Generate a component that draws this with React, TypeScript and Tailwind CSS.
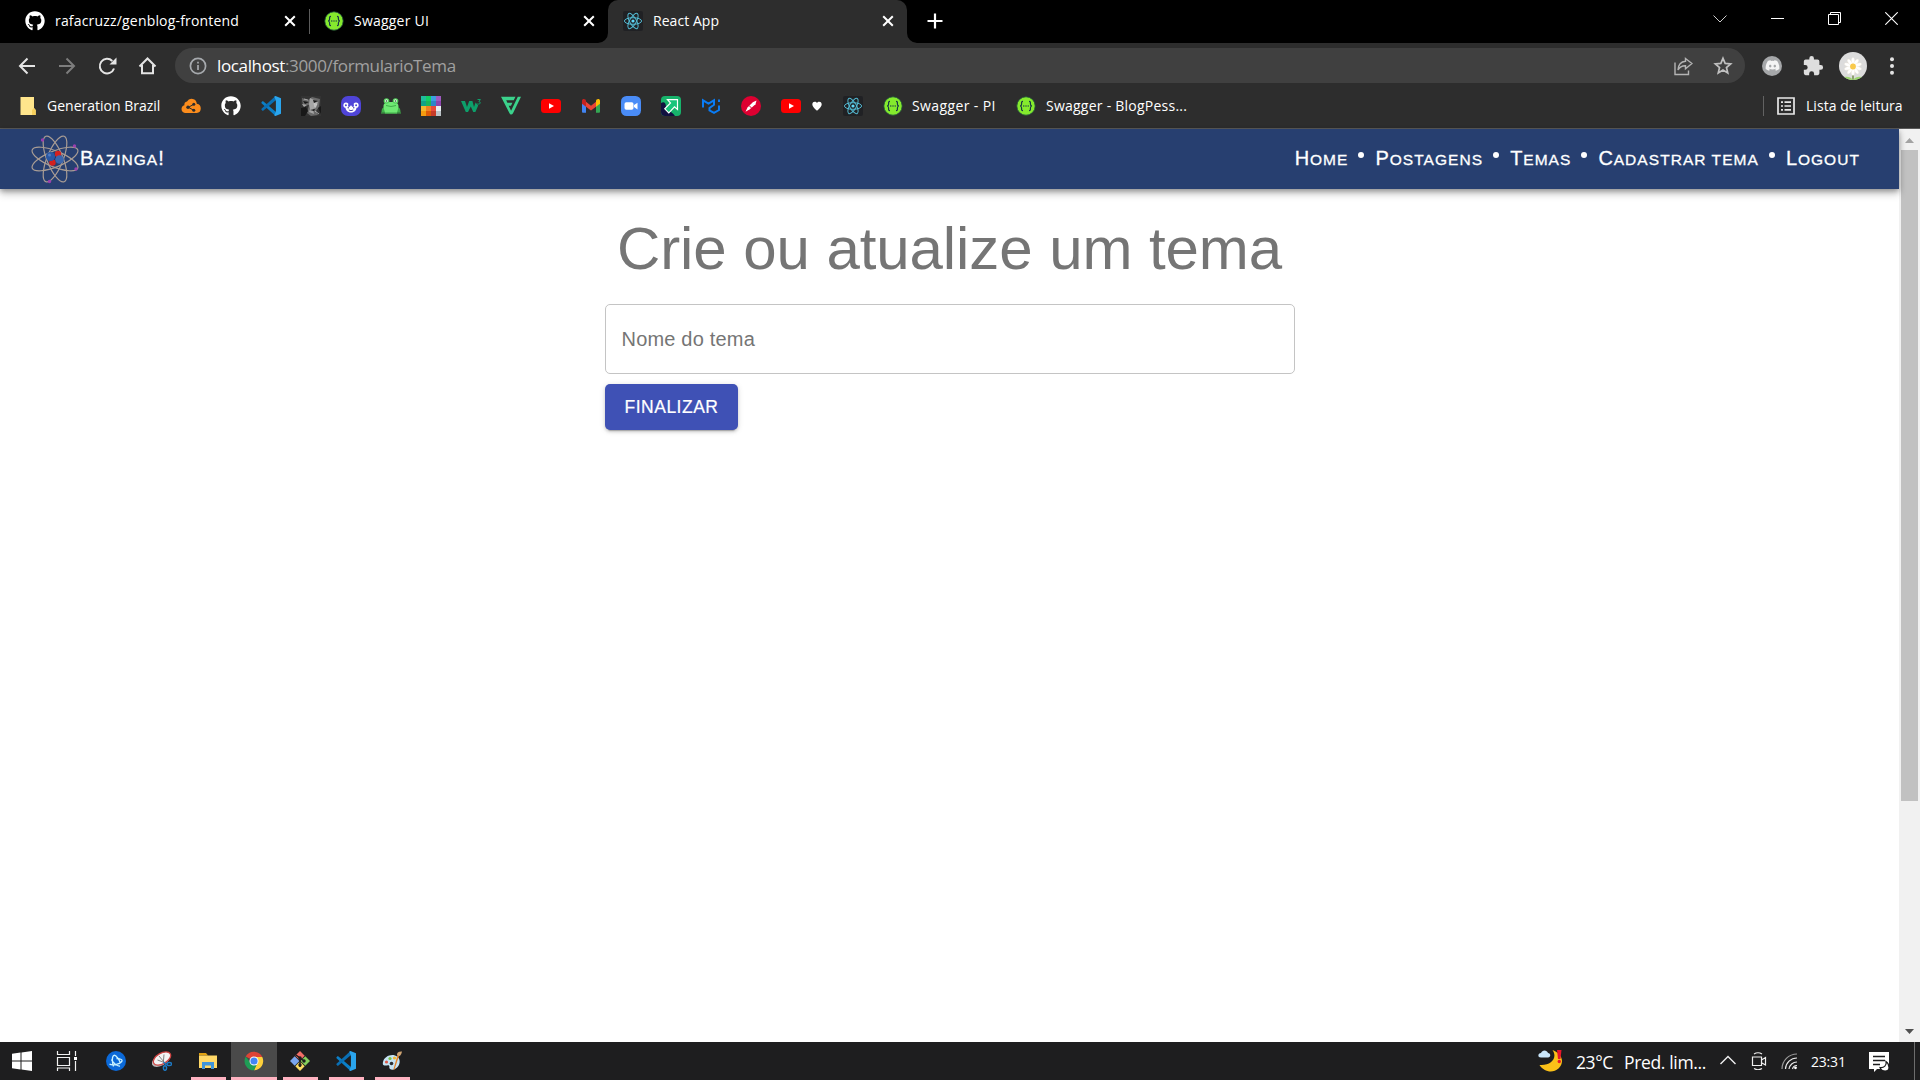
import React from "react";
import { FaGithub, FaDiscord } from "react-icons/fa";

const ui = "font-['Open_Sans','Noto_Sans',sans-serif]";

function GithubIcon() {
  return <FaGithub className="size-5 shrink-0 text-white" />;
}

function SwaggerIcon() {
  return (
    <svg viewBox="0 0 20 20" className="size-5 shrink-0">
      <circle cx="10" cy="10" r="9.2" fill="#85ea2d" stroke="#20503f" strokeWidth="0.8" />
      <g fill="none" stroke="#173647" strokeWidth="1.2">
        <path d="M7 5.400C5.300 5.400 5.600 6.800 5.600 8S5 10 4 10c1 0 1.600.8 1.600 2s-.3 2.600 1.400 2.600" />
        <path d="M13 5.400c1.700 0 1.400 1.400 1.400 2.600s.6 2 1.600 2c-1 0-1.600.8-1.600 2s.3 2.600-1.400 2.600" />
      </g>
      <g fill="#173647">
        <circle cx="7.800" cy="10" r=".7" />
        <circle cx="10" cy="10" r=".7" />
        <circle cx="12.200" cy="10" r=".7" />
      </g>
    </svg>
  );
}

function ReactTile() {
  return (
    <span className="flex size-5 shrink-0 items-center justify-center rounded-[2px] bg-[#202124]">
      <svg viewBox="0 0 20 20" className="size-5" fill="none" stroke="#53b9d1" strokeWidth="1">
        <ellipse cx="10" cy="10" rx="8.600" ry="3.300" />
        <ellipse cx="10" cy="10" rx="8.600" ry="3.300" transform="rotate(60 10 10)" />
        <ellipse cx="10" cy="10" rx="8.600" ry="3.300" transform="rotate(120 10 10)" />
        <circle cx="10" cy="10" r="1.600" fill="#61dafb" stroke="none" />
      </svg>
    </span>
  );
}

function VsCodeIcon() {
  return (
    <svg viewBox="0 0 20 20" className="size-5">
      <path d="M.4 6.200 1.900 5l12.800 10.800L14.600 20 .5 7.300z" fill="#0b7fc7" />
      <path d="M.4 13.800 1.900 15 14.800 4.300 14.500 0 .5 12.700z" fill="#0a6fb4" />
      <path d="M14.500 0 20 2.300v15.400L14.500 20l-1.200-.6L14.900 15V5l-1.600-4.400z" fill="#2aa5ee" />
    </svg>
  );
}

function YoutubeIcon() {
  return (
    <svg viewBox="0 0 20 20" className="size-5 shrink-0">
      <rect y="3" width="20" height="14" rx="3.500" fill="#f00" />
      <path d="M8 7.200v5.600l5-2.800z" fill="#fff" />
    </svg>
  );
}

function CloseX({ className = "" }: { className?: string }) {
  return (
    <svg viewBox="0 0 12 12" className={`size-3 shrink-0 ${className}`}>
      <path d="M1.200 1.200l9.600 9.600M10.800 1.200 1.200 10.800" stroke="#fff" strokeWidth="2" />
    </svg>
  );
}

function TabStrip() {
  return (
    <div className="flex h-[43px] bg-black text-[14px] text-white">
      <div className="flex h-full w-[310px] items-center pb-px pl-[25px]">
        <GithubIcon />
        <span className="-mt-px ml-[10px] w-[230px] tracking-[0.18px] whitespace-nowrap">rafacruzz/genblog-frontend</span>
        <CloseX className="-ml-[1px]" />
        <span className="ml-[13px] h-[25px] w-px bg-[#5c5c5c]" />
      </div>
      <div className="flex h-full w-[298px] items-center pb-px pl-[14px]">
        <SwaggerIcon />
        <span className="-mt-px ml-[10px] w-[229px] tracking-[0.22px] whitespace-nowrap">Swagger UI</span>
        <CloseX />
      </div>
      <div className="relative flex h-full w-[299px] items-center rounded-t-[10px] bg-[#2d2d2d] pb-px pl-[15px]">
        <svg viewBox="0 0 10 10" className="absolute bottom-0 -left-[10px] size-[10px]">
          <path d="M10 0v10H0A10 10 0 0 0 10 0z" fill="#2d2d2d" />
        </svg>
        <svg viewBox="0 0 10 10" className="absolute -right-[10px] bottom-0 size-[10px]">
          <path d="M0 0v10h10A10 10 0 0 1 0 0z" fill="#2d2d2d" />
        </svg>
        <ReactTile />
        <span className="-mt-px ml-[10px] w-[229px] tracking-[0.05px] whitespace-nowrap">React App</span>
        <CloseX />
      </div>
      <svg viewBox="0 0 16 16" className="mt-[13px] ml-[20px] size-4">
        <path d="M8 .5v15M.5 8h15" stroke="#fff" strokeWidth="2.200" />
      </svg>
      <div className="ml-auto flex h-[37px] items-center gap-[44px] pr-[22px]">
        <svg viewBox="0 0 14 14" className="size-[14px]" fill="none" stroke="#ccc">
          <path d="M.5 3.500 7 10l6.500-6.500" />
        </svg>
        <svg viewBox="0 0 13 13" className="size-[13px]">
          <path d="M0 6.500h13" stroke="#fff" />
        </svg>
        <svg viewBox="0 0 13 13" className="size-[13px]" fill="none" stroke="#fff">
          <path d="M.5 2.500h10v10H.5zM2.500 2.500v-2h10v10h-2" />
        </svg>
        <svg viewBox="0 0 13 13" className="size-[13px]" stroke="#fff" strokeWidth="1.100">
          <path d="m.3.3 12.400 12.400M12.700.3.3 12.700" />
        </svg>
      </div>
    </div>
  );
}

function AddressRow() {
  return (
    <div className="flex h-[45px] items-center">
      <svg viewBox="0 0 20 20" className="ml-[17px] size-5" fill="none" stroke="#e4e4e4" strokeWidth="2">
        <path d="M18 10H3.500M10.500 2.500 3 10l7.500 7.500" />
      </svg>
      <svg viewBox="0 0 20 20" className="ml-5 size-5" fill="none" stroke="#7d7d7d" strokeWidth="2">
        <path d="M2 10h14.500M9.500 2.500 17 10l-7.500 7.500" />
      </svg>
      <svg viewBox="0 0 20 20" className="ml-5 size-5" fill="none" stroke="#e4e4e4" strokeWidth="2">
        <path d="M17 12.500A7.300 7.300 0 1 1 15.300 5" />
        <path d="M19.500 1.500V8.500h-7z" fill="#e4e4e4" stroke="none" />
      </svg>
      <svg viewBox="0 0 20 20" className="ml-5 size-5" fill="none" stroke="#e4e4e4" strokeWidth="2">
        <path d="M5 9v8.300h11V9M2.500 10.500l8-8 8 8" />
      </svg>
      <div className="ml-[18px] flex h-[35px] w-[1570px] items-center rounded-full bg-[#404040]">
        <svg viewBox="0 0 18 18" className="ml-[14px] size-[18px]" fill="none" stroke="#a6a9ad" strokeWidth="1.700">
          <circle cx="9" cy="9" r="7.600" />
          <path d="M9 8v5M9 4.800v1.700" />
        </svg>
        <span className="ml-[10px] text-[17px] tracking-[-0.36px] whitespace-nowrap text-[#a0a0a0]">
          <span className="text-white">localhost</span>:3000/formularioTema
        </span>
        <svg viewBox="0 0 20 20" className="mr-5 ml-auto size-5" fill="none" stroke="#b4b4b4" strokeWidth="1.400">
          <path d="M2 6.500v12h13.500v-4" />
          <path d="M12.500 2.500 19 7.500l-6.500 5.300V9.800C9 9.700 6.600 11 5 14c.3-5 3-8.300 7.500-8.700z" />
        </svg>
        <svg viewBox="0 0 20 20" className="mr-[12.5px] size-5" fill="none" stroke="#c0c0c0" strokeWidth="1.700">
          <path d="m10 2.300 2.150 5.100 5.500.5-4.200 3.600 1.300 5.400L10 14l-4.750 2.900 1.300-5.400-4.200-3.600 5.500-.5z" />
        </svg>
      </div>
      <span className="ml-[17px] flex size-5 items-center justify-center rounded-full bg-[#a5a7a9]">
        <FaDiscord className="size-[15px] text-[#f4f4f4]" />
      </span>
      <svg viewBox="0 0 24 24" className="ml-[20px] size-[22px]" fill="#dedede">
        <path d="M20.500 11H19V7a2 2 0 0 0-2-2h-4V3.500a2.500 2.500 0 0 0-5 0V5H4a2 2 0 0 0-2 2v3.800h1.500a2.700 2.700 0 0 1 0 5.400H2V20a2 2 0 0 0 2 2h3.800v-1.500a2.700 2.700 0 0 1 5.400 0V22H17a2 2 0 0 0 2-2v-4h1.500a2.500 2.500 0 0 0 0-5z" />
      </svg>
      <svg viewBox="0 0 28 28" className="ml-[15px] size-7">
        <clipPath id="avatarClip">
          <circle cx="14" cy="14" r="14" />
        </clipPath>
        <g clipPath="url(#avatarClip)">
          <rect width="28" height="28" fill="#dcdcdc" />
          <path d="M14 18v10" stroke="#5d7c2e" strokeWidth="1.200" />
          <path d="M5 25q6-1 9 3H5zM23 25q-6-1-9 3h9z" fill="#9cd66e" />
          <g fill="#fff" stroke="#eee3cf" strokeWidth=".3">
            {[0, 36, 72, 108, 144, 180, 216, 252, 288, 324].map((a) => (
              <ellipse key={a} cx="14" cy="9.500" rx="1.700" ry="4" transform={`rotate(${a} 14 14.500)`} />
            ))}
          </g>
          <circle cx="14" cy="14.500" r="2.900" fill="#f9c94a" />
        </g>
      </svg>
      <svg viewBox="0 0 6 18" className="ml-[22px] h-[18px] w-[6px]" fill="#e4e4e4">
        <circle cx="3" cy="2.300" r="2" />
        <circle cx="3" cy="9" r="2" />
        <circle cx="3" cy="15.700" r="2" />
      </svg>
    </div>
  );
}

const gridColors = [
  "#1fbc9c", "#12ce62", "#3c9fe0", "#9f5bc0",
  "#12a286", "#1db45a", "#2e86c8", "#8e44ad",
  "#f5b82e", "#f08124", "#e94b3b", "#e9eef0",
  "#f59b0f", "#dc5a08", "#c63b28", "#bcc3c7",
];

function BookmarkIcons() {
  return (
    <div className="grid auto-cols-[40px] grid-flow-col">
      <svg viewBox="0 0 20 20" className="size-5">
        <path d="M4 17a4 4 0 0 1-.6-7.800A3.400 3.400 0 0 1 6 5.400a5.300 5.300 0 0 1 9.800 2.300A4.700 4.700 0 0 1 15.700 17z" fill="#fb8c1c" />
        <path d="m12.700 8.300-5.200 3 5.200 3" fill="none" stroke="#2d2d2d" />
        <g fill="#2d2d2d">
          <circle cx="7" cy="11.300" r="1.700" />
          <circle cx="12.800" cy="8.300" r="1.500" />
          <circle cx="12.800" cy="14.200" r="1.500" />
        </g>
      </svg>
      <GithubIcon />
      <VsCodeIcon />
      <svg viewBox="0 0 20 20" className="size-5">
        <rect width="20" height="20" fill="#333" />
        <path d="M1 2 7 4l4-3 8 2-1 8-3 4 2 4-7 1-4-3 2-8-6 1z" fill="#6a6a6a" />
        <path d="M9 2 8 8l1 5-1 3 5 2-1-5 3-1 2-6-4-2zM1 8l5 1-3 2z" fill="#a5a5a5" />
        <path d="M12 4l5 1-4 2zM2 5l6 1-4 2zM0 12l5-1 2 4-3 5H0zM9 14l5-1-1 2zM17 12l3-2v8z" fill="#181818" />
        <path d="M13 7.500l3 .5-2 3zM3 3l4 1M14 15l4 3" stroke="#ccc" strokeWidth=".7" fill="#bdbdbd" />
      </svg>
      <svg viewBox="0 0 20 20" className="size-5">
        <rect width="20" height="20" rx="7" fill="#4f44d8" />
        <circle cx="5" cy="9.200" r="2.600" fill="#fff" />
        <circle cx="15" cy="9.200" r="2.600" fill="#fff" />
        <path d="M4.500 10h11c.5 4-2 6.500-5.500 6.500S4 14 4.500 10z" fill="#fff" />
        <path d="M7.200 8.500q2.800-1.500 5.600 0v2.200H7.200z" fill="#4f44d8" />
        <circle cx="4.900" cy="9.200" r="1" fill="#4f44d8" />
        <circle cx="15.100" cy="9.200" r="1" fill="#4f44d8" />
        <circle cx="7.200" cy="11.800" r=".7" fill="#3b309c" />
        <circle cx="12.800" cy="11.800" r=".7" fill="#3b309c" />
        <rect x="9" y="9.500" width="2" height="3.800" rx="1" fill="#fff" />
        <path d="M7.800 14q2.200 1.300 4.400 0" fill="none" stroke="#3b309c" strokeWidth=".9" />
      </svg>
      <svg viewBox="0 0 20 20" className="size-5">
        <path d="M.5 16.500c0-5 2-5.500 4-5.500h11c2 0 4 .5 4 5.500z" fill="#3fae49" />
        <path d="M4 17.500c0-2-1.500-5-1.500-7C2.500 7 5 6 10 6s7.500 1 7.500 4.500c0 2-1.500 5-1.500 7z" fill="#6fe873" />
        <circle cx="5.500" cy="5" r="2.800" fill="#55d15d" />
        <circle cx="14.500" cy="5" r="2.800" fill="#55d15d" />
        <circle cx="5.500" cy="4.800" r="1.500" fill="#e9ffe9" />
        <circle cx="14.500" cy="4.800" r="1.500" fill="#e9ffe9" />
        <circle cx="5.500" cy="5" r=".8" fill="#24552a" />
        <circle cx="14.500" cy="5" r=".8" fill="#24552a" />
        <path d="M0 17h20M5 9.500q5 2 10 0" stroke="#3fae49" fill="none" />
      </svg>
      <div className="grid size-5 grid-cols-4">
        {gridColors.map((c) => (
          <span key={c} style={{ backgroundColor: c }} />
        ))}
      </div>
      <svg viewBox="0 0 20 20" className="size-5 overflow-visible">
        <path d="M0 5h4l2 6 2.200-6h3.200l1.600 6 1.600-4.500 2.600 3-2.800 6.500h-2.200L9.800 10.500 7 16H4.800z" fill="#0d9f6a" />
        <path d="M16.500 3.500h2.900l-1.500 2.200c2.200 0 1.700 3.200-1.600 2.200" fill="none" stroke="#0d9f6a" strokeWidth="1" />
      </svg>
      <svg viewBox="0 0 20 20" className="size-5">
        <path d="M0 .8h14.500l-1.800 3.400H5.200l1.200 2.600h5L10 9.700H7.700l2.400 5L16.800.8H20L12 17.300c-1 1.800-2.700 1.700-3.500 0z" fill="#3bd28c" />
      </svg>
      <YoutubeIcon />
      <svg viewBox="0 0 20 20" className="size-5">
        <path d="M1 5v10.500c0 .8.500 1.300 1.200 1.300H5V8z" fill="#4285f4" />
        <path d="M19 5v10.500c0 .8-.5 1.300-1.200 1.300H15V8z" fill="#34a853" />
        <path d="M5 5.800 10 9.700l5-3.900v4.900l-5 3.800-5-3.800z" fill="#ea4335" />
        <path d="M1 5c0-2 2-2.500 3.300-1.400L5 4.200v6.500L1 7.700z" fill="#c5221f" />
        <path d="M19 5c0-2-2-2.500-3.300-1.400l-.7.600v6.500l4-3z" fill="#fbbc04" />
      </svg>
      <svg viewBox="0 0 20 20" className="size-5">
        <rect width="20" height="20" rx="5.500" fill="#4a8cf7" />
        <rect x="3.500" y="6.300" width="9" height="7.500" rx="1.800" fill="#fff" />
        <path d="m13 9 3.500-2.300v6.700L13 11z" fill="#fff" />
      </svg>
      <svg viewBox="0 0 20 20" className="size-5">
        <rect width="20" height="20" rx="4" fill="#17b36b" />
        <path d="M0 7c3-2 5 0 5 4s5 3 9 9H4q-4 0-4-4z" fill="#11103f" />
        <path d="M6.500 3.700h10v9.800l-3-2.700-5.700 6-4-4L9.500 7z" fill="#17c57b" stroke="#fff" strokeWidth="1.200" />
      </svg>
      <svg viewBox="0 0 20 20" className="size-5" fill="none" stroke="#0a7cf5" strokeWidth="2">
        <path d="M2 11.500V4.300l5.500 3.300L13 4.300v4.500L8.500 12v2.500l4.500 2.300 5-2.800V9.500M18 3.500v2.600" />
      </svg>
      <svg viewBox="0 0 20 20" className="size-5">
        <circle cx="10" cy="10" r="10" fill="#dd0031" />
        <path d="m4.500 15.800 2-4.300 5.300-5.300 3.700-1.700-1 3.800-5.700 5z" fill="#fff" />
        <path d="m8 9.500 2.500 2.500" stroke="#dd0031" />
      </svg>
    </div>
  );
}

function BookmarksBar() {
  return (
    <div className="flex h-[41px] items-center border-b border-[#5a5a5a] pb-[5px] text-[14px] text-white">
      <svg viewBox="0 0 16 18" className="ml-[20px] h-[18px] w-4">
        <path d="M.5 0h13.500v11l1.700 2v5H.5z" fill="#ffe58c" />
        <path d="M12 18v-5l2-2 1.700 2v5z" fill="#f6cf5c" />
      </svg>
      <span className="ml-[11px] w-[134px] tracking-[0px] whitespace-nowrap">Generation Brazil</span>
      <BookmarkIcons />
      <YoutubeIcon />
      <svg viewBox="0 0 10 10" className="ml-[11px] size-[10px]">
        <path d="M5 9.700C2 7 .3 5.300.3 3.200.3.300 4 0 5 2 6 0 9.700.3 9.700 3.200 9.700 5.300 8 7 5 9.700z" fill="#fff" />
      </svg>
      <span className="ml-[21px]" />
      <ReactTile />
      <span className="ml-5" />
      <SwaggerIcon />
      <span className="ml-[9px] w-[104px] tracking-[0.38px] whitespace-nowrap">Swagger - PI</span>
      <SwaggerIcon />
      <span className="ml-[10px] tracking-[0.24px] whitespace-nowrap">Swagger - BlogPess...</span>
      <span className="mr-[13px] ml-auto h-5 w-px bg-[#626262]" />
      <svg viewBox="0 0 18 18" className="size-[18px]" fill="none" stroke="#e8e8e8" strokeWidth="1.700">
        <path d="M1 1h16v16H1zM4 5.200h2M7.500 5.200H14M4 9h2M7.500 9H14M4 12.800h2M7.500 12.800H14" />
      </svg>
      <span className="ml-[11px] w-[114px] tracking-[0.04px] whitespace-nowrap">Lista de leitura</span>
    </div>
  );
}

function AtomLogo() {
  return (
    <svg viewBox="0 0 48 50" className="ml-[31px] h-[50px] w-12" fill="none">
      <g stroke="#a89c94" strokeWidth="1.200">
        <ellipse cx="24" cy="25" rx="24.500" ry="8" transform="rotate(22 24 25)" />
        <ellipse cx="24" cy="25" rx="24.500" ry="8" transform="rotate(68 24 25)" />
        <ellipse cx="24" cy="25" rx="24.500" ry="8" transform="rotate(112 24 25)" />
        <ellipse cx="24" cy="25" rx="24.500" ry="8" transform="rotate(158 24 25)" />
      </g>
      <circle cx="24" cy="23.500" r="4" fill="#173067" />
      <circle cx="27" cy="20" r="3.200" fill="#d4201f" />
      <circle cx="21.500" cy="28.500" r="3.200" fill="#d4201f" />
      <circle cx="19.500" cy="22.500" r="4.600" fill="#2a58a4" />
      <circle cx="28.500" cy="25.500" r="4.300" fill="#3a66ae" />
      <circle cx="18.500" cy="21" r="1.500" fill="#4f7cc4" />
      <g fill="#9b3fae">
        <circle cx="11.500" cy="6" r="1.700" />
        <circle cx="43.500" cy="12" r="1.700" />
        <circle cx="45" cy="35" r="1.700" />
        <circle cx="18.500" cy="47.500" r="1.700" />
      </g>
    </svg>
  );
}

function SmallCaps({ children }: { children: React.ReactNode }) {
  return (
    <span className="block text-[15.5px] leading-[24px] tracking-[1.05px] whitespace-nowrap uppercase [-webkit-text-stroke:0.3px_white] first-letter:text-[20px] first-letter:tracking-[0.9px]">
      {children}
    </span>
  );
}

function Dot() {
  return <span className="-mt-[9px] -ml-px size-[6px] rounded-full bg-white" />;
}

function SiteHeader() {
  return (
    <header className="relative flex h-[60px] items-center bg-[#273f70] font-['Liberation_Sans',Arial,sans-serif] text-white shadow-[0_2px_5px_rgba(0,0,0,0.3),0_5px_8px_rgba(0,0,0,0.2)]">
      <AtomLogo />
      <span className="ml-px">
        <SmallCaps>
          Bazinga<span className="text-[20px]">!</span>
        </SmallCaps>
      </span>
      <nav className="mr-[39px] ml-auto flex items-center gap-[11px]">
        <SmallCaps>Home</SmallCaps>
        <Dot />
        <SmallCaps>Postagens</SmallCaps>
        <Dot />
        <SmallCaps>Temas</SmallCaps>
        <Dot />
        <SmallCaps>Cadastrar tema</SmallCaps>
        <Dot />
        <SmallCaps>Logout</SmallCaps>
      </nav>
    </header>
  );
}

function ThemeForm() {
  return (
    <main className="mx-auto w-[690px] pt-[25px] font-['Liberation_Sans',Arial,sans-serif]">
      <h1 className="text-center text-[60px] leading-[70px] tracking-[-0.08px] whitespace-nowrap text-[#757575]">Crie ou atualize um tema</h1>
      <div className="mt-[20px] flex h-[70px] items-center rounded-[5px] border border-[#c4c4c4] pl-4 text-[20px] tracking-[0.19px] text-[#757575]">
        Nome do tema
      </div>
      <button className="mt-[10px] flex h-[46px] w-[133px] items-center justify-center rounded-[5px] bg-[#3f51b5] pl-px text-[17.5px] tracking-[0.5px] text-white shadow-[0_4px_1px_-3px_rgba(0,0,0,0.2),0_2px_3px_rgba(0,0,0,0.14),0_1px_6px_rgba(0,0,0,0.12)] [-webkit-text-stroke:0.2px_white]">
        FINALIZAR
      </button>
    </main>
  );
}

function Scrollbar() {
  return (
    <div className="flex w-[21px] flex-col items-center bg-[#f1f1f1]">
      <svg viewBox="0 0 21 21" className="size-[21px]">
        <path d="M6 14h9l-4.500-5z" fill="#a3a3a3" />
      </svg>
      <div className="h-[651px] w-[17px] bg-[#c1c1c1]" />
      <svg viewBox="0 0 21 21" className="mt-auto size-[21px]">
        <path d="M6 8h9l-4.500 5z" fill="#505050" />
      </svg>
    </div>
  );
}

function TaskCell({ children, open, active }: { children: React.ReactNode; open?: boolean; active?: boolean }) {
  return (
    <div className={`flex h-full w-[46px] flex-col items-center ${active ? "bg-[#4a4a4a]" : ""}`}>
      <div className="mt-[9px] mb-auto size-5">{children}</div>
      {open && <span className={`h-[3px] bg-[#ffb3c1] ${active ? "w-full" : "w-[35px]"}`} />}
    </div>
  );
}

function Taskbar() {
  return (
    <footer className="flex h-[38px] items-center bg-[#1e1e1f] text-white">
      <div className="flex h-full w-[44px] justify-center pt-[9px]">
        <svg viewBox="0 0 20 20" className="size-5" fill="#fff">
          <path d="M0 2.800 8.500 1.600v7.900H0zM9.500 1.400 20 0v9.500H9.500zM0 10.500h8.500v7.900L0 17.200zM9.500 10.500H20V20L9.500 18.600z" />
        </svg>
      </div>
      <div className="flex h-full w-[49px] pt-[9px] pl-[12px]">
        <svg viewBox="0 0 21 20" className="h-5 w-[21px]" fill="none" stroke="#f2f2f2" strokeWidth="1.200">
          <path d="M1.500 0v3.500h12V0M1.500 6.500h12v8h-12zM1.500 20v-3h12v3M19.500 0v5M19.500 10v10" />
          <path d="M18 6h3v3h-3z" fill="#fff" stroke="none" />
        </svg>
      </div>
      <TaskCell>
        <svg viewBox="0 0 20 20" className="size-5" fill="none" stroke="#c8f2ff" strokeWidth="1.300">
          <circle cx="10" cy="10" r="10" fill="#0b69d8" stroke="none" />
          <path d="M7.500 15.500C5.800 11 6 4.800 8 4.300s5.500 4.500 6.500 8.200M3.500 13C6 15 13.500 13.500 15.800 10.500c1.200-2-2.300-3-5.300-3M5.500 8.500c1 3 5.500 7 8.500 6.500" />
        </svg>
      </TaskCell>
      <TaskCell>
        <svg viewBox="0 0 20 20" className="size-5">
          <ellipse cx="9" cy="9" rx="10" ry="5.500" transform="rotate(-30 9 9)" fill="#b7b7b7" />
          <ellipse cx="10" cy="7.500" rx="9.500" ry="5.300" transform="rotate(-30 10 7.500)" fill="#f5f5f5" stroke="#cf4544" strokeWidth="1.300" />
          <path d="m7 5 5 6M12 3.500l-.7 8M5.500 9l5.500 2" stroke="#777" strokeWidth=".9" />
          <g fill="none" stroke="#1d78c2" strokeWidth="1.500">
            <ellipse cx="13" cy="17" rx="1.600" ry="2.300" />
            <ellipse cx="17.300" cy="13" rx="2.300" ry="1.600" />
            <path d="m11.500 11 3 3" />
          </g>
        </svg>
      </TaskCell>
      <TaskCell open>
        <svg viewBox="0 0 20 20" className="size-5">
          <path d="M1 2h7l2 2.500h-9z" fill="#e0a112" />
          <path d="M1 4.500h18V17H1z" fill="#ffd867" />
          <path d="M4 18v-7h12v7h-3v-3.500H7V18z" fill="#3f94da" />
        </svg>
      </TaskCell>
      <TaskCell open active>
        <svg viewBox="0 0 20 20" className="size-5">
          <path d="M10 10 1.700 5.500A9.300 9.300 0 0 1 18.300 6z" fill="#dd4436" />
          <path d="M10 10h4L10 19.300A9.300 9.300 0 0 0 18.300 6H10z" fill="#fdd03b" />
          <path d="M10 10 6.500 12 1.700 5.500A9.300 9.300 0 0 0 10 19.300l3.500-7.300z" fill="#1f9d55" />
          <circle cx="10" cy="10" r="4.500" fill="#fff" />
          <circle cx="10" cy="10" r="3.600" fill="#4285f4" />
        </svg>
      </TaskCell>
      <TaskCell open>
        <svg viewBox="0 0 20 20" className="size-5">
          <path d="m10 0 4.700 4.700L10 9.400 5.300 4.700z" fill="#f26d66" />
          <path d="m4.700 5.300 4.700 4.700-4.700 4.700L0 10z" fill="#7ba6ee" />
          <path d="m15.300 5.300L20 10l-4.700 4.700-4.700-4.700z" fill="#85cf5c" />
          <path d="m10 10.600 4.700 4.700L10 20l-4.700-4.700z" fill="#fbdc63" />
          <path d="m6 4 8 6M10 7v9" stroke="#1c1c1c" strokeWidth="1.500" />
          <circle cx="10" cy="7" r="1.700" fill="#1c1c1c" />
          <circle cx="14" cy="10" r="1.700" fill="#1c1c1c" />
          <circle cx="10" cy="14" r="1.700" fill="#1c1c1c" />
        </svg>
      </TaskCell>
      <TaskCell open>
        <VsCodeIcon />
      </TaskCell>
      <TaskCell open>
        <svg viewBox="0 0 20 20" className="size-5">
          <path d="M1 11C2 6 8 3 13 4.500s6 7 3 11c-2 3-6 4-8 2.500-1.500-1.200 0-2.500-1-3.500s-3 .5-4.700 0S.7 12.500 1 11z" fill="#c5e4f4" />
          <circle cx="8" cy="7.500" r="1.600" fill="#7bbf45" />
          <circle cx="12.500" cy="7" r="1.600" fill="#f3b72f" />
          <circle cx="4.500" cy="11" r="1.600" fill="#dc5a4a" />
          <circle cx="9.500" cy="12.500" r="1.800" fill="#292e33" />
          <path d="m17 5-4.500 13.500-1 .5.200-1.700L15.500 4z" fill="#e7862c" />
          <path d="M15 4c0-3 2-3.500 5-3.500-.5 2-1 4-3 4.700z" fill="#d0a573" />
        </svg>
      </TaskCell>
      <svg viewBox="0 0 26 24" className="mr-[12px] ml-auto h-6 w-[26px]">
        <path d="M14.500 1C20 9 13 17 1.500 16c4 6.500 13 9 19 3.500S25 5 14.500 1z" fill="#fbc118" />
        <path d="M3 8.500c-4 0-3-4.500 0-4.500 1-3.500 6-3.500 7 0 3 0 3 4.500 0 4.500z" fill="#c9e6fa" />
        <path d="M19 1h4.500L22.500 10H20z" fill="#e8172b" />
        <circle cx="21.300" cy="12.500" r="1.700" fill="#e8172b" />
      </svg>
      <span className="mt-[2px] w-[48px] text-[17.500px] tracking-[-0.4px] whitespace-nowrap">23°C</span>
      <span className="mt-[2px] w-[95px] text-[17.500px] tracking-[-0.35px] whitespace-nowrap">Pred. lim...</span>
      <svg viewBox="0 0 18 18" className="size-[18px]" fill="none" stroke="#f0f0f0" strokeWidth="1.400">
        <path d="m1.500 12 7.500-7.500 7.500 7.500" />
      </svg>
      <svg viewBox="0 0 16 18" className="ml-[14px] h-[18px] w-4" fill="none" stroke="#f0f0f0" strokeWidth="1.200">
        <path d="M1.500 5h9v8.500h-9zM10.500 8 14.500 5.500v7.500L10.500 10.700M3 2q4-2.500 8 0M3 16.500q4 2.500 8 0" />
      </svg>
      <svg viewBox="0 0 18 18" className="ml-[13px] size-[18px]" fill="none" strokeWidth="1.200">
        <path d="M2 17A15 15 0 0 1 17 2" stroke="#9a9a9a" />
        <path d="M5.500 17A11.500 11.500 0 0 1 17 6M9 17A8 8 0 0 1 17 10M12.500 17A4.500 4.500 0 0 1 17 13.500" stroke="#e8e8e8" />
        <circle cx="15.500" cy="15.800" r="1.400" fill="#fff" />
      </svg>
      <span className="ml-[13px] w-[58px] text-[14px] tracking-[-0.2px] whitespace-nowrap">23:31</span>
      <svg viewBox="0 0 21 21" className="mt-[2px] h-[21px] w-[21px]">
        <path d="M0 0h20v17H8l-3 3v-3H0z" fill="#fff" />
        <path d="M4 4.500h12M4 8.500h12M4 12.500h7" stroke="#1e1e1f" strokeWidth="1.300" />
        <path d="M17 9.500c1 4-2 6.500-6 6 2 5 9 4.500 9 0 0-3-1.500-5-3-6z" fill="#fff" stroke="#1e1e1f" strokeWidth="1.200" />
      </svg>
      <span className="mr-[5px] ml-[24px] h-full w-px bg-[#6d6d6d]" />
    </footer>
  );
}

export default function App() {
  return (
    <div className={`flex h-[1080px] w-[1920px] flex-col overflow-hidden bg-white ${ui}`}>
      <TabStrip />
      <div className="bg-[#2d2d2d]">
        <AddressRow />
        <BookmarksBar />
      </div>
      <div className="flex min-h-0 flex-1">
        <div className="min-w-0 flex-1 bg-white">
          <SiteHeader />
          <ThemeForm />
        </div>
        <Scrollbar />
      </div>
      <Taskbar />
    </div>
  );
}
